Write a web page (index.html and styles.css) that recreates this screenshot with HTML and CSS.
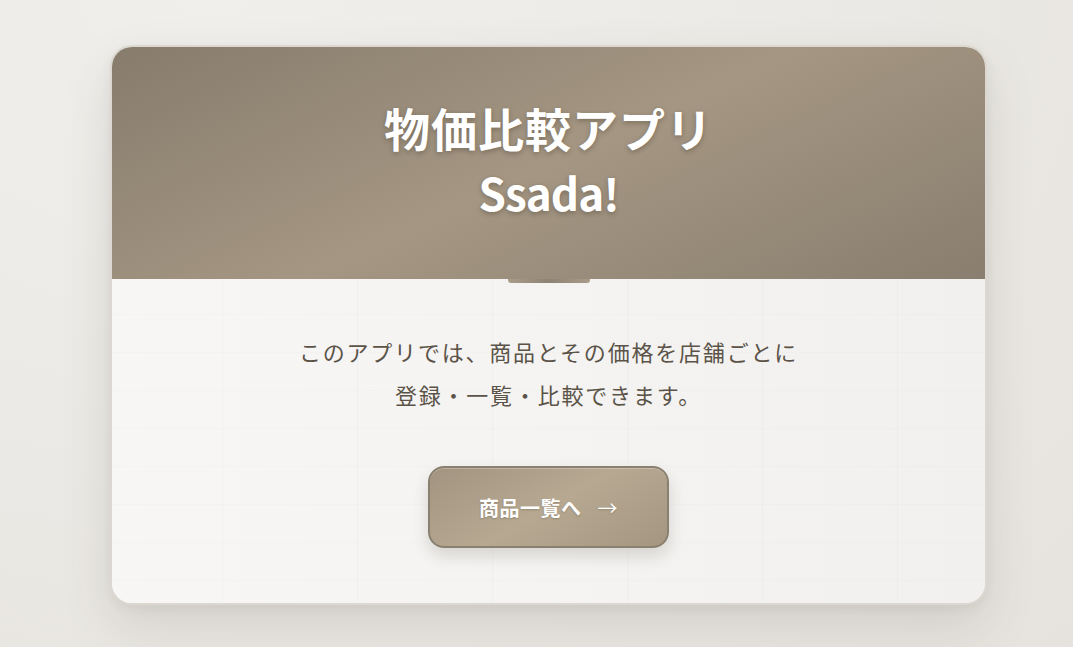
FILE: index.html
```html
<!DOCTYPE html>
<html lang="ja">
<head>
<meta charset="utf-8">
<title>物価比較アプリ Ssada!</title>
<link rel="stylesheet" href="styles.css">
</head>
<body>
  <main class="card">
    <header class="card-header">
      <h1 class="title">物価比較アプリ<br><span class="title-latin">Ssada!</span></h1>
    </header>
    <section class="card-body">
      <p class="lead">このアプリでは、商品とその価格を店舗ごとに<br>登録・一覧・比較できます。</p>
      <a class="btn" href="#">商品一覧へ<span class="arrow">→</span></a>
    </section>
  </main>
</body>
</html>
```

FILE: styles.css
```css
html, body {
  margin: 0;
  height: 100%;
}

body {
  background: radial-gradient(ellipse at 20% 0%, #f0efec 0%, #ebe9e5 55%, #e6e3de 100%);
  font-family: "Noto Sans CJK JP", "Noto Sans", sans-serif;
  padding: 45px 0 0 110px;
  box-sizing: border-box;
  overflow: hidden;
}

.card {
  width: 877px;
  box-sizing: border-box;
  border: 2px solid #dcd8d1;
  border-radius: 22px;
  overflow: hidden;
  background: #f4f3f1;
  box-shadow: 0 22px 50px rgba(70, 60, 45, 0.13), 0 4px 12px rgba(70, 60, 45, 0.06);
}

.card-header {
  position: relative;
  height: 232px;
  display: flex;
  align-items: center;
  justify-content: center;
  background: linear-gradient(155deg, #877c6d 0%, #a49682 50%, #897e6f 100%);
}

.card-header::after {
  content: "";
  position: absolute;
  left: 50%;
  bottom: -4px;
  width: 82px;
  height: 4px;
  margin-left: -41px;
  border-radius: 0 0 3px 3px;
  background: linear-gradient(90deg, #a99b88, #8c8375 50%, #a99b88);
  z-index: 1;
}

.title {
  margin: 0;
  padding-bottom: 8px;
  color: #ffffff;
  font-weight: 700;
  font-size: 46px;
  line-height: 64px;
  letter-spacing: 1px;
  text-align: center;
  text-shadow: 0 2px 5px rgba(40, 30, 20, 0.3);
}

.title-latin {
  font-size: 44px;
  letter-spacing: -1px;
}

.card-body {
  display: flex;
  flex-direction: column;
  align-items: center;
  padding: 51px 0 55px;
  background-color: #f4f3f1;
  background-image:
    linear-gradient(90deg, rgba(0, 0, 0, 0.02) 1px, transparent 1px),
    linear-gradient(0deg, rgba(0, 0, 0, 0.01) 1px, transparent 1px),
    linear-gradient(90deg, rgba(255, 255, 255, 0.3), rgba(0, 0, 0, 0.01));
  background-size: 135px 100%, 100% 38px, 100% 100%;
  background-position: 110px 0, 0 36px, 0 0;
}

.lead {
  margin: 0 0 50px;
  color: #5b5348;
  font-size: 22px;
  line-height: 43px;
  letter-spacing: 1.8px;
  text-align: center;
}

.btn {
  display: flex;
  align-items: center;
  justify-content: center;
  width: 241px;
  height: 82px;
  box-sizing: border-box;
  border: 2px solid #8a8070;
  border-radius: 16px;
  background: linear-gradient(150deg, #a29480 0%, #b6a891 50%, #a49681 100%);
  box-shadow: inset 0 1px 0 rgba(255, 255, 255, 0.25), 0 8px 16px rgba(60, 50, 35, 0.16);
  color: #ffffff;
  font-weight: 700;
  font-size: 20px;
  letter-spacing: 0.5px;
  text-decoration: none;
  text-shadow: 0 1px 2px rgba(40, 30, 20, 0.2);
}

.arrow {
  margin-left: 16px;
  font-weight: 400;
}
```
